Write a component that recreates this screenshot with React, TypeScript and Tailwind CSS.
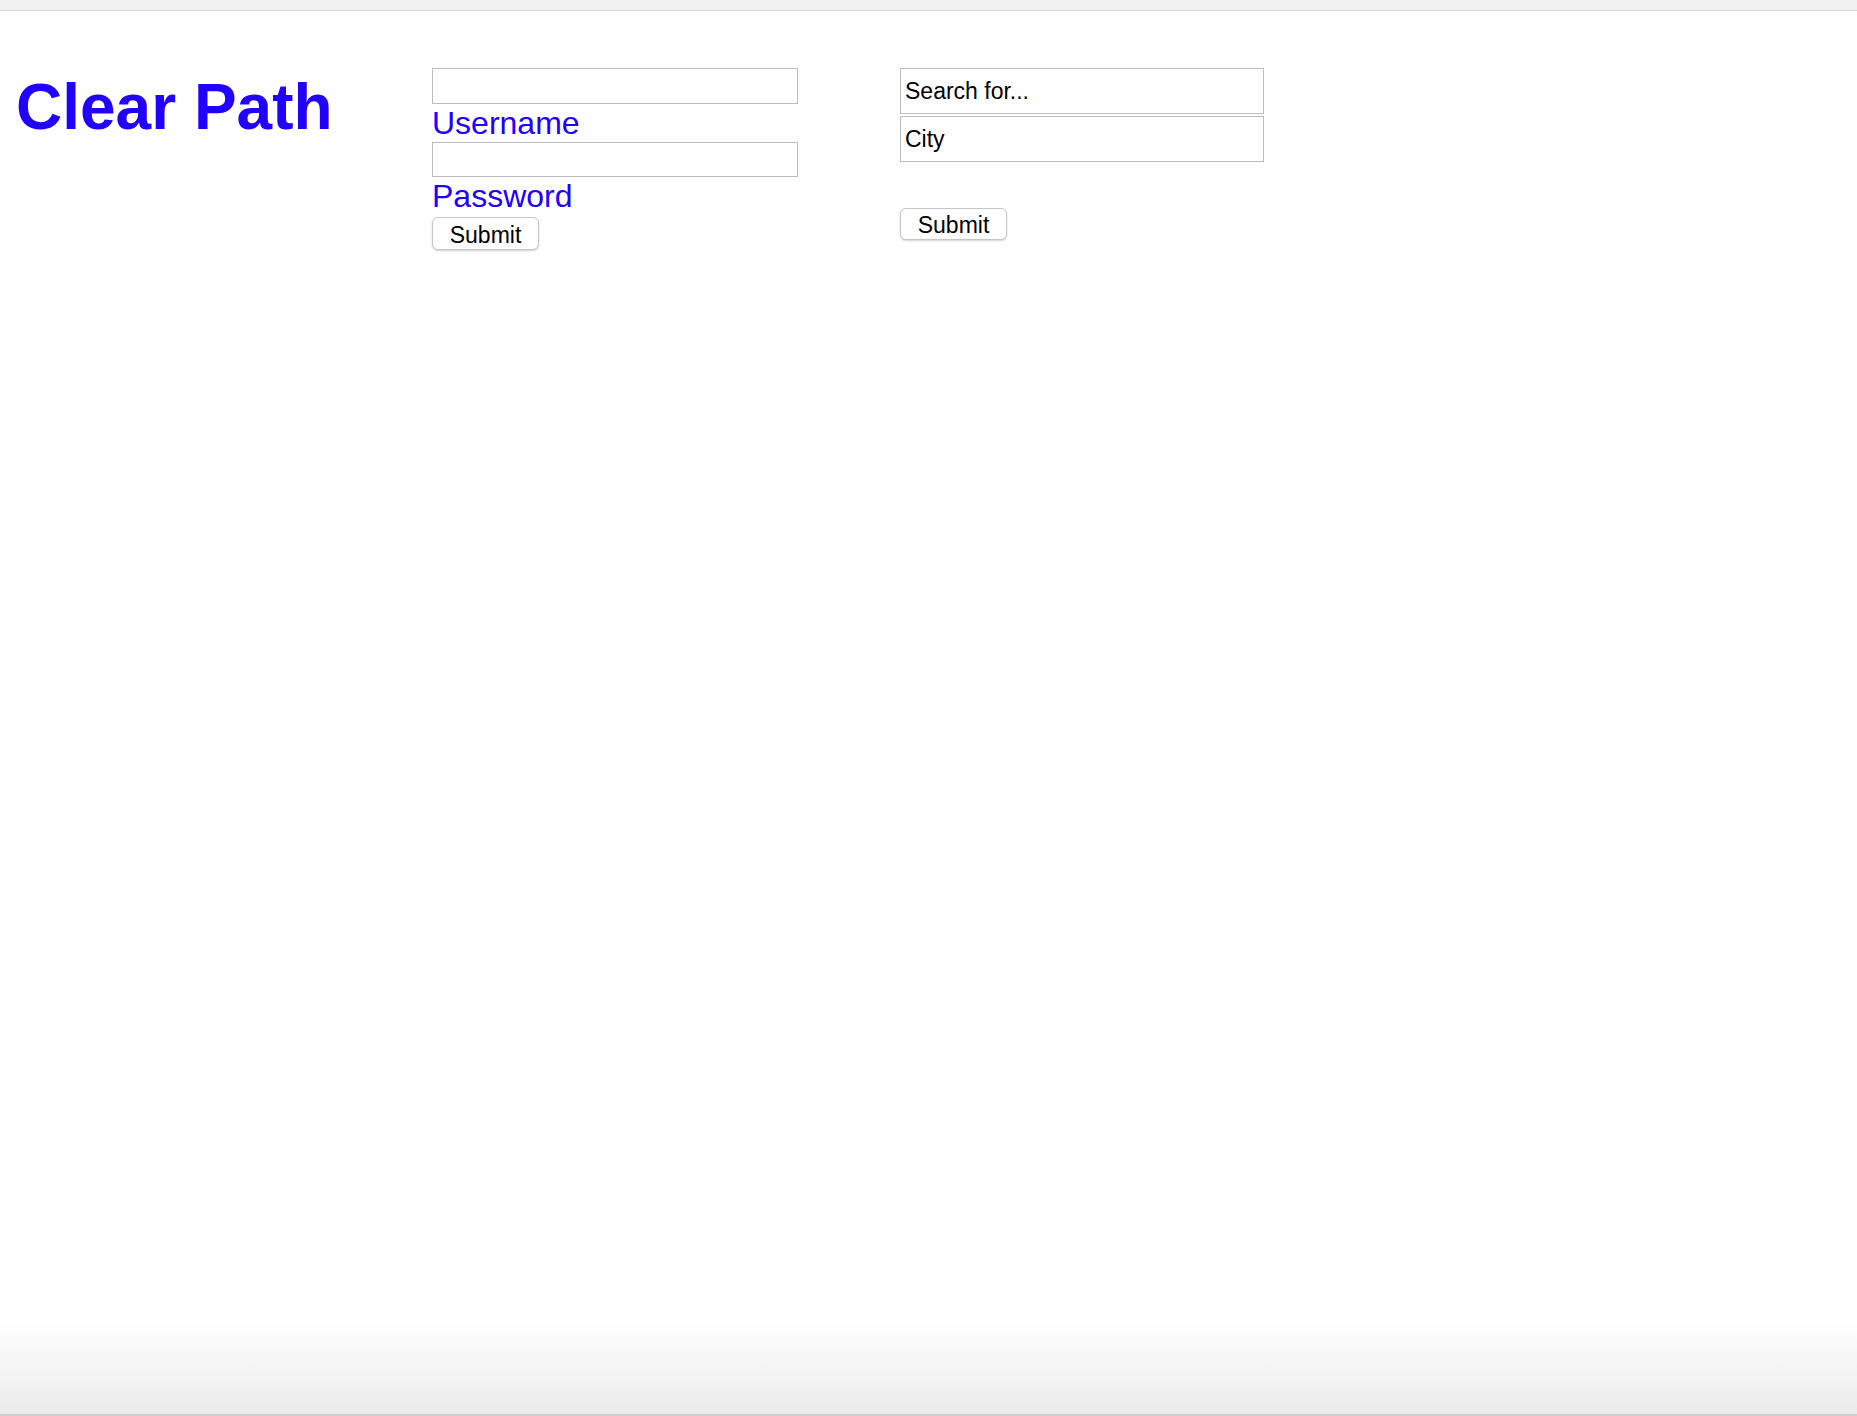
import { useState } from 'react';

const blue = 'text-[#2100ff]';

function LoginForm() {
  const [user, setUser] = useState('');
  const [pass, setPass] = useState('');
  return (
    <form className="flex flex-col w-[366px]" onSubmit={e => e.preventDefault()}>
      <input
        value={user}
        onChange={e => setUser(e.target.value)}
        className="h-[36px] border border-[#bdbdbd] px-1 text-[22px] outline-none"
      />
      <label className={`${blue} text-[32px] leading-[38px]`}>Username</label>
      <input
        type="password"
        value={pass}
        onChange={e => setPass(e.target.value)}
        className="h-[35px] border border-[#bdbdbd] px-1 text-[22px] outline-none"
      />
      <label className={`${blue} text-[32px] leading-[38px]`}>Password</label>
      <SubmitButton className="mt-[2px] h-[33px]" />
    </form>
  );
}

function SubmitButton({ className }: { className?: string }) {
  return (
    <button
      type="submit"
      className={`w-[107px] pt-[3px] bg-white border border-[#c6c6c6] rounded-[6px] shadow-[0_1px_2px_rgba(0,0,0,0.18)] text-[23px] leading-none text-black ${className ?? ''}`}
    >
      Submit
    </button>
  );
}

function SearchForm() {
  return (
    <form className="flex flex-col w-[364px]" onSubmit={e => e.preventDefault()}>
      <input
        placeholder="Search for..."
        className="h-[46px] border border-[#bdbdbd] px-1 text-[23px] text-black placeholder:text-black outline-none"
      />
      <input
        placeholder="City"
        className="mt-[2px] h-[46px] border border-[#bdbdbd] px-1 text-[23px] text-black placeholder:text-black outline-none"
      />
      <SubmitButton className="mt-[46px] h-[32px]" />
    </form>
  );
}

export default function App() {
  return (
    <div className="h-screen flex flex-col bg-white font-['Liberation_Sans',Arial,sans-serif]">
      <div className="h-[11px] bg-[#f1f1f1] border-b border-[#d6d6d6]" />
      <main className="flex-1 flex items-start pl-[16px] pt-[57px]">
        <h1 className={`w-[416px] mt-[7px] text-[64px] leading-[64px] font-bold ${blue}`}>Clear Path</h1>
        <LoginForm />
        <div className="w-[102px]" />
        <SearchForm />
      </main>
      <div className="h-[96px] bg-linear-to-b from-white to-[#ebebeb] border-b-2 border-[#cfcfcf]" />
    </div>
  );
}
